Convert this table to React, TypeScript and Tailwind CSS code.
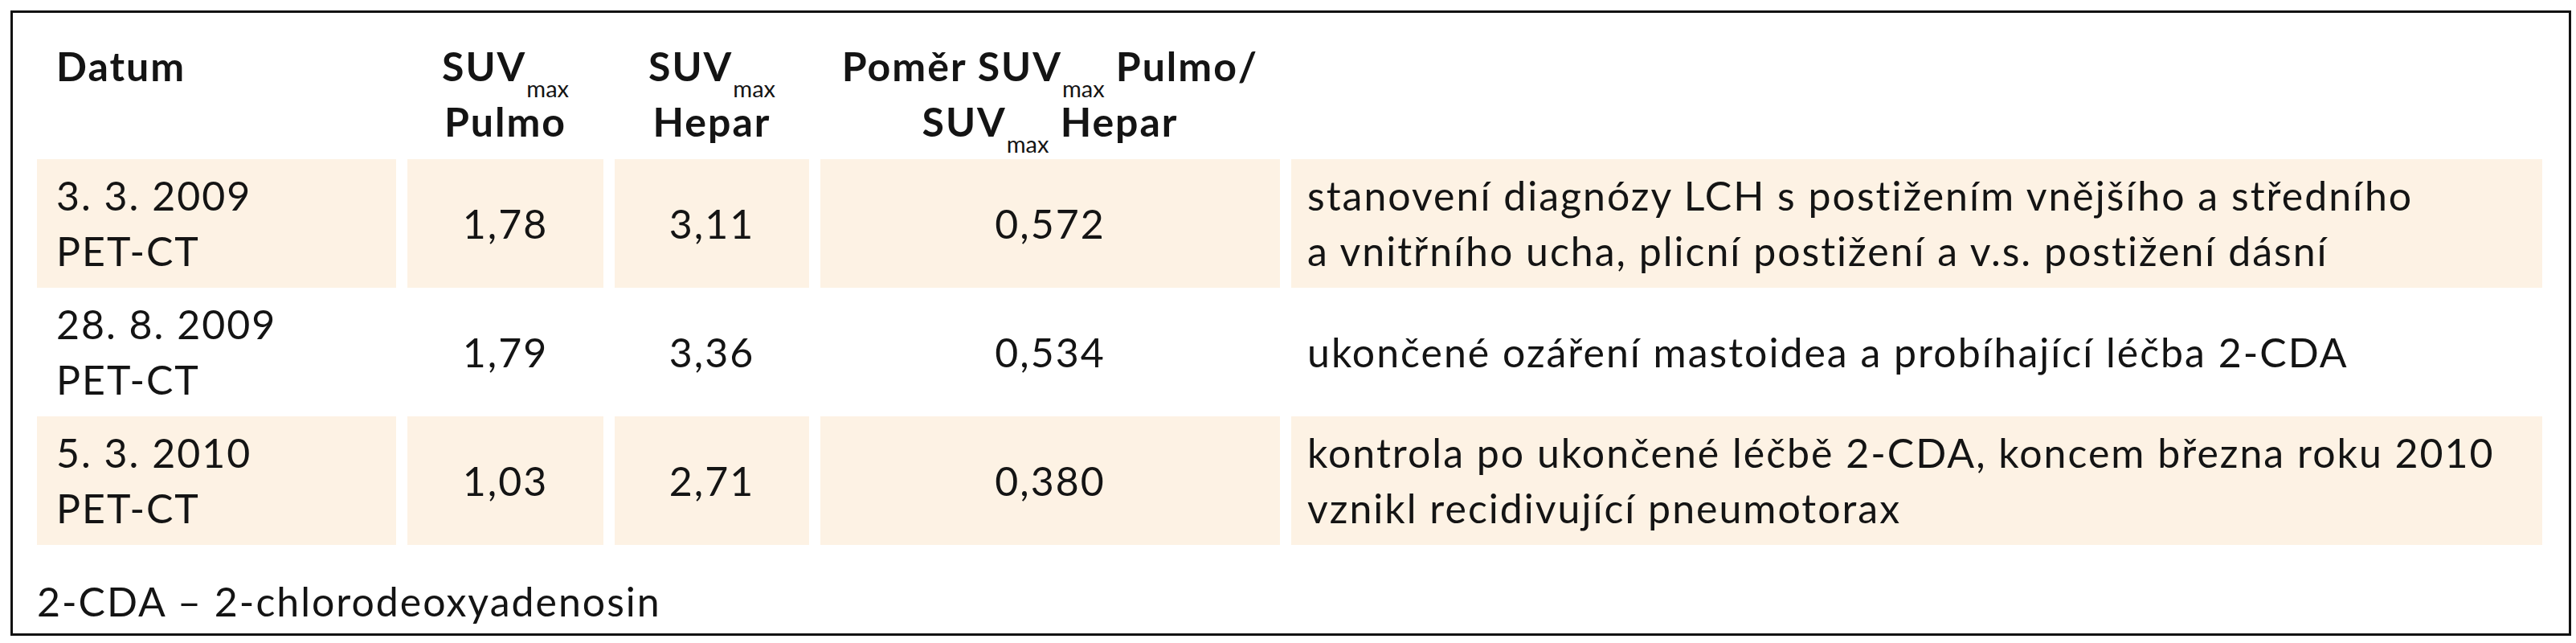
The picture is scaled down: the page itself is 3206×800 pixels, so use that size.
import React from 'react';

type Row = {
  date: string;
  pulmo: string;
  hepar: string;
  ratio: string;
  note: React.ReactNode;
};

const rows: Row[] = [
  {
    date: '3. 3. 2009',
    pulmo: '1,78',
    hepar: '3,11',
    ratio: '0,572',
    note: (
      <>
        stanovení diagnózy LCH s postižením vnějšího a středního
        <br />a vnitřního ucha, plicní postižení a v.s. postižení dásní
      </>
    ),
  },
  {
    date: '28. 8. 2009',
    pulmo: '1,79',
    hepar: '3,36',
    ratio: '0,534',
    note: <>ukončené ozáření mastoidea a probíhající léčba 2-CDA</>,
  },
  {
    date: '5. 3. 2010',
    pulmo: '1,03',
    hepar: '2,71',
    ratio: '0,380',
    note: (
      <>
        kontrola po ukončené léčbě 2-CDA, koncem března roku 2010
        <br />
        vznikl recidivující pneumotorax
      </>
    ),
  },
];

// small "max" index under SUV
const Sub = () => (
  <span className="relative top-[20px] text-[29px] font-normal tracking-normal leading-none">max</span>
);

const cols = 'grid grid-cols-[447px_244px_242px_572px_1557px] gap-x-[14px]';

export default function App() {
  return (
    <div className="min-h-[800px] w-[3206px] bg-white pt-[13px] pl-[13px] font-['Lato',_'Noto_Sans',_sans-serif] text-[50px] leading-[69px] tracking-[2px] text-[#141414]">
      <div className="h-[778px] w-[3187px] border-[3px] border-[#111] pt-[32px] pl-[30px]">
        {/* Header */}
        <div className={`${cols} h-[150px] font-bold`}>
          <div className="pl-[24px]">Datum</div>
          <div className="text-center">
            SUV<Sub />
            <br />
            Pulmo
          </div>
          <div className="text-center">
            SUV<Sub />
            <br />
            Hepar
          </div>
          <div className="text-center">
            Poměr SUV<Sub /> Pulmo/
            <br />
            SUV<Sub /> Hepar
          </div>
          <div />
        </div>

        {/* Rows */}
        {rows.map((r, i) => {
          const bg = i !== 1 ? 'bg-[#fdf2e4]' : '';
          return (
            <div key={r.date} className={`${cols} h-[160px]`}>
              <div className={`flex items-center pl-[24px] ${bg}`}>
                <div>
                  {r.date}
                  <br />
                  PET-CT
                </div>
              </div>
              <div className={`flex items-center justify-center ${bg}`}>{r.pulmo}</div>
              <div className={`flex items-center justify-center ${bg}`}>{r.hepar}</div>
              <div className={`flex items-center justify-center ${bg}`}>{r.ratio}</div>
              <div className={`flex items-center pl-[20px] ${bg}`}>
                <div>{r.note}</div>
              </div>
            </div>
          );
        })}

        {/* Footnote */}
        <div className="mt-[36px]">2-CDA – 2-chlorodeoxyadenosin</div>
      </div>
    </div>
  );
}
